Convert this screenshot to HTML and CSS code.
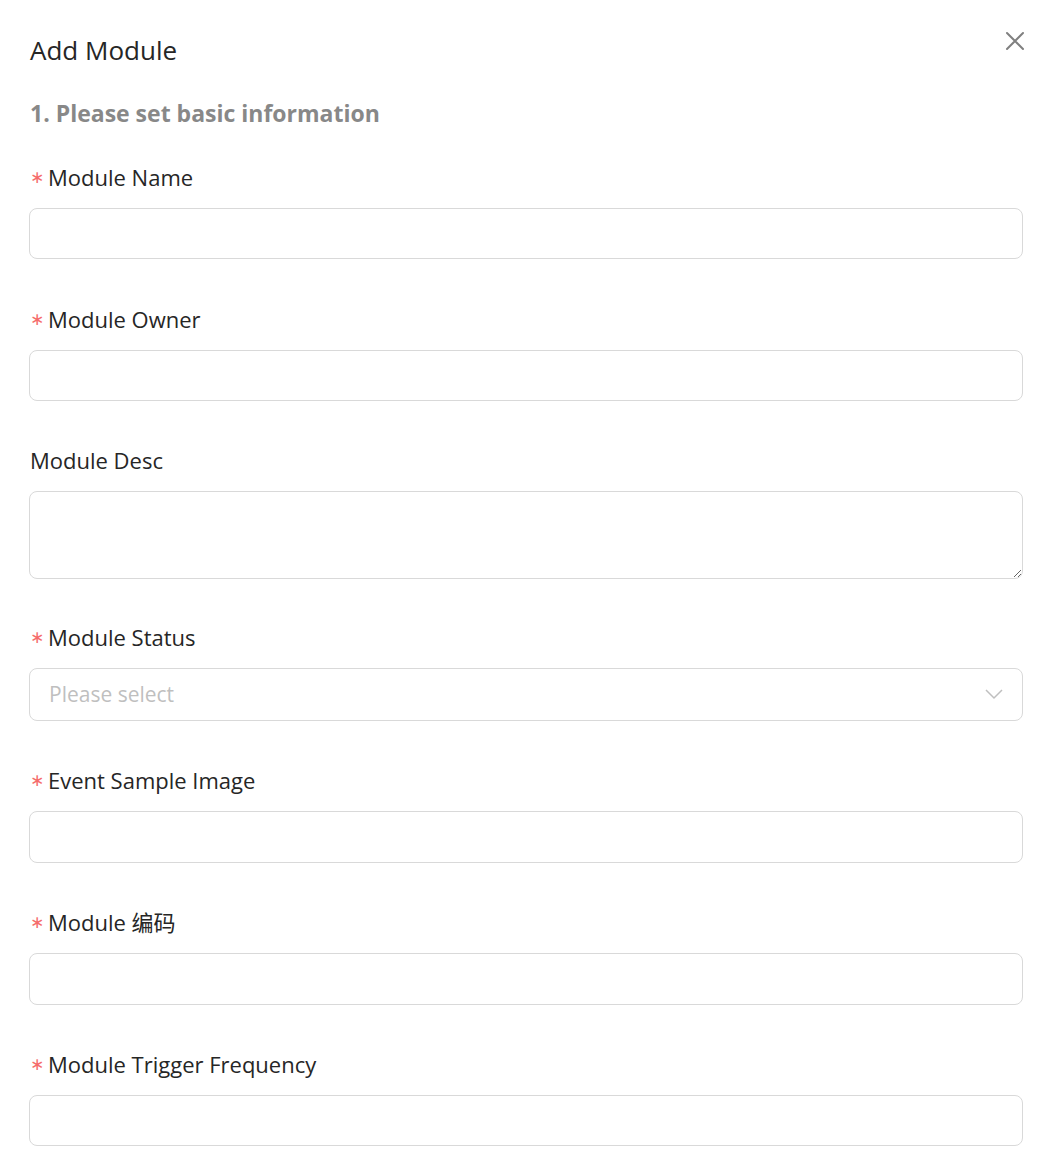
FILE: index.html
```html
<!DOCTYPE html>
<html lang="en">
<head>
<meta charset="utf-8">
<title>Add Module</title>
<link rel="stylesheet" href="styles.css">
</head>
<body>
<div class="dialog">
  <div class="header">
    <h2 class="title">Add Module</h2>
    <button class="close" aria-label="Close">
      <svg width="20" height="20" viewBox="0 0 20 20"><path d="M2 2 L18 18 M18 2 L2 18" stroke="#808080" stroke-width="2" stroke-linecap="round" fill="none"/></svg>
    </button>
  </div>
  <h3 class="section">1. Please set basic information</h3>
  <form class="form">
    <div class="item">
      <label class="label"><span class="req">∗</span>Module Name</label>
      <input class="input" type="text">
    </div>
    <div class="item">
      <label class="label"><span class="req">∗</span>Module Owner</label>
      <input class="input" type="text">
    </div>
    <div class="item">
      <label class="label">Module Desc</label>
      <textarea class="textarea"></textarea>
    </div>
    <div class="item">
      <label class="label"><span class="req">∗</span>Module Status</label>
      <div class="select">
        <span class="placeholder">Please select</span>
        <svg class="chev" width="18" height="12" viewBox="0 0 18 12"><path d="M1 2 L9 10 L17 2" stroke="#bfbfbf" stroke-width="1.5" fill="none"/></svg>
      </div>
    </div>
    <div class="item">
      <label class="label"><span class="req">∗</span>Event Sample Image</label>
      <input class="input h52" type="text">
    </div>
    <div class="item">
      <label class="label"><span class="req">∗</span>Module 编码</label>
      <input class="input h52" type="text">
    </div>
    <div class="item">
      <label class="label"><span class="req">∗</span>Module Trigger Frequency</label>
      <input class="input" type="text">
    </div>
  </form>
</div>
</body>
</html>
```

FILE: styles.css
```css
* { box-sizing: border-box; }
html, body { margin: 0; padding: 0; background: #fff; }
body {
  font-family: "Open Sans", "Noto Sans", "Noto Sans CJK SC", sans-serif;
  color: #262626;
}
.dialog {
  padding: 30px 20px 20px 29px;
}
.header {
  display: flex;
  justify-content: space-between;
  align-items: flex-start;
}
.title {
  margin: 0 0 0 1px;
  font-size: 26px;
  font-weight: 500;
  line-height: 40px;
  color: #262626;
}
.close {
  border: 0;
  background: none;
  padding: 0;
  margin: 1px -2px 0 0;
  width: 20px;
  height: 20px;
  cursor: pointer;
}
.close svg { display: block; }
.section {
  margin: 28px 0 34px 1px;
  font-size: 23px;
  font-weight: 700;
  line-height: 30px;
  color: #888888;
}
.form { display: flex; flex-direction: column; }
.item {
  display: flex;
  flex-direction: column;
  margin-bottom: 44.5px;
}
.item:nth-child(3) { margin-bottom: 42.5px; }
.item:nth-child(5) { margin-bottom: 43.5px; }
.label {
  font-size: 22px;
  line-height: 30px;
  height: 30px;
  margin: 0 0 16px 1px;
  color: #262626;
  display: flex;
  align-items: center;
}
.req {
  font-family: "DejaVu Sans", sans-serif;
  color: #f56c6c;
  font-size: 17px;
  width: 18px;
  display: inline-block;
  line-height: 30px;
}
.input, .textarea, .select {
  width: 100%;
  border: 1px solid #d9d9d9;
  border-radius: 8px;
  background: #fff;
  font-family: inherit;
  font-size: 20px;
  outline: none;
}
.input { height: 51px; padding: 0 19px; }
.input.h52 { height: 52px; }
.textarea {
  height: 88px;
  resize: vertical;
  display: block;
  padding: 8px 19px;
}
.select {
  height: 53px;
  padding: 0 19px;
  display: flex;
  align-items: center;
  justify-content: space-between;
}
.placeholder {
  color: #bfbfbf;
  font-size: 21px;
}
.chev { display: block; }
```
